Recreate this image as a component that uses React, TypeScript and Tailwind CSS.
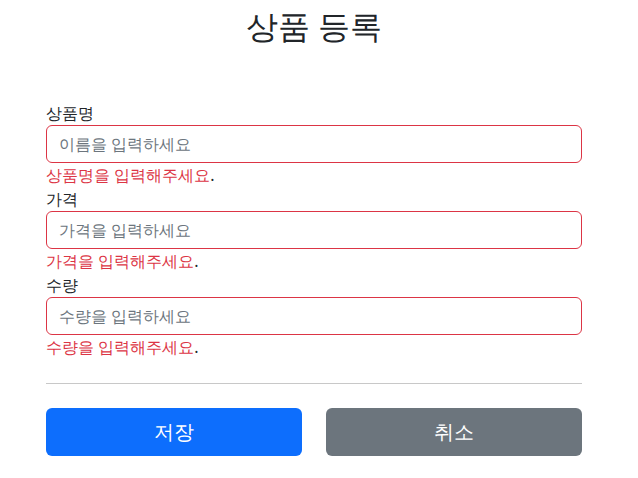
const fields = [
  { label: "상품명", placeholder: "이름을 입력하세요", error: "상품명을 입력해주세요" },
  { label: "가격", placeholder: "가격을 입력하세요", error: "가격을 입력해주세요" },
  { label: "수량", placeholder: "수량을 입력하세요", error: "수량을 입력해주세요" },
]

export default function App() {
  return (
    <div
      className="min-h-screen bg-white text-[#212529] text-base leading-6"
      style={{
        fontFamily:
          'system-ui, -apple-system, "Segoe UI", Roboto, "Helvetica Neue", "Noto Sans", "Liberation Sans", Arial, sans-serif',
      }}
    >
      <div className="ml-[46px] w-[536px]">
        <div className="pt-[7px] pb-12 text-center">
          <h2 className="mb-2 text-[32px] leading-[1.2] font-normal">상품 등록</h2>
        </div>

        <form>
          {fields.map((f) => (
            <div key={f.label}>
              <label className="block">{f.label}</label>
              <input
                type="text"
                placeholder={f.placeholder}
                className="block w-full h-[38px] px-3 py-1.5 border border-[#dc3545] rounded-md outline-none placeholder:text-[#6c757d]"
              />
              <div>
                <span className="text-[#dc3545]">{f.error}</span>.
              </div>
            </div>
          ))}

          <hr className="my-6 border-t border-[#c8c8c8]" />

          <div className="grid grid-cols-2 gap-6">
            <button
              type="button"
              className="h-12 rounded-md bg-[#0d6efd] text-white text-xl"
            >
              저장
            </button>
            <button
              type="button"
              className="h-12 rounded-md bg-[#6c757d] text-white text-xl"
            >
              취소
            </button>
          </div>
        </form>
      </div>
    </div>
  )
}
